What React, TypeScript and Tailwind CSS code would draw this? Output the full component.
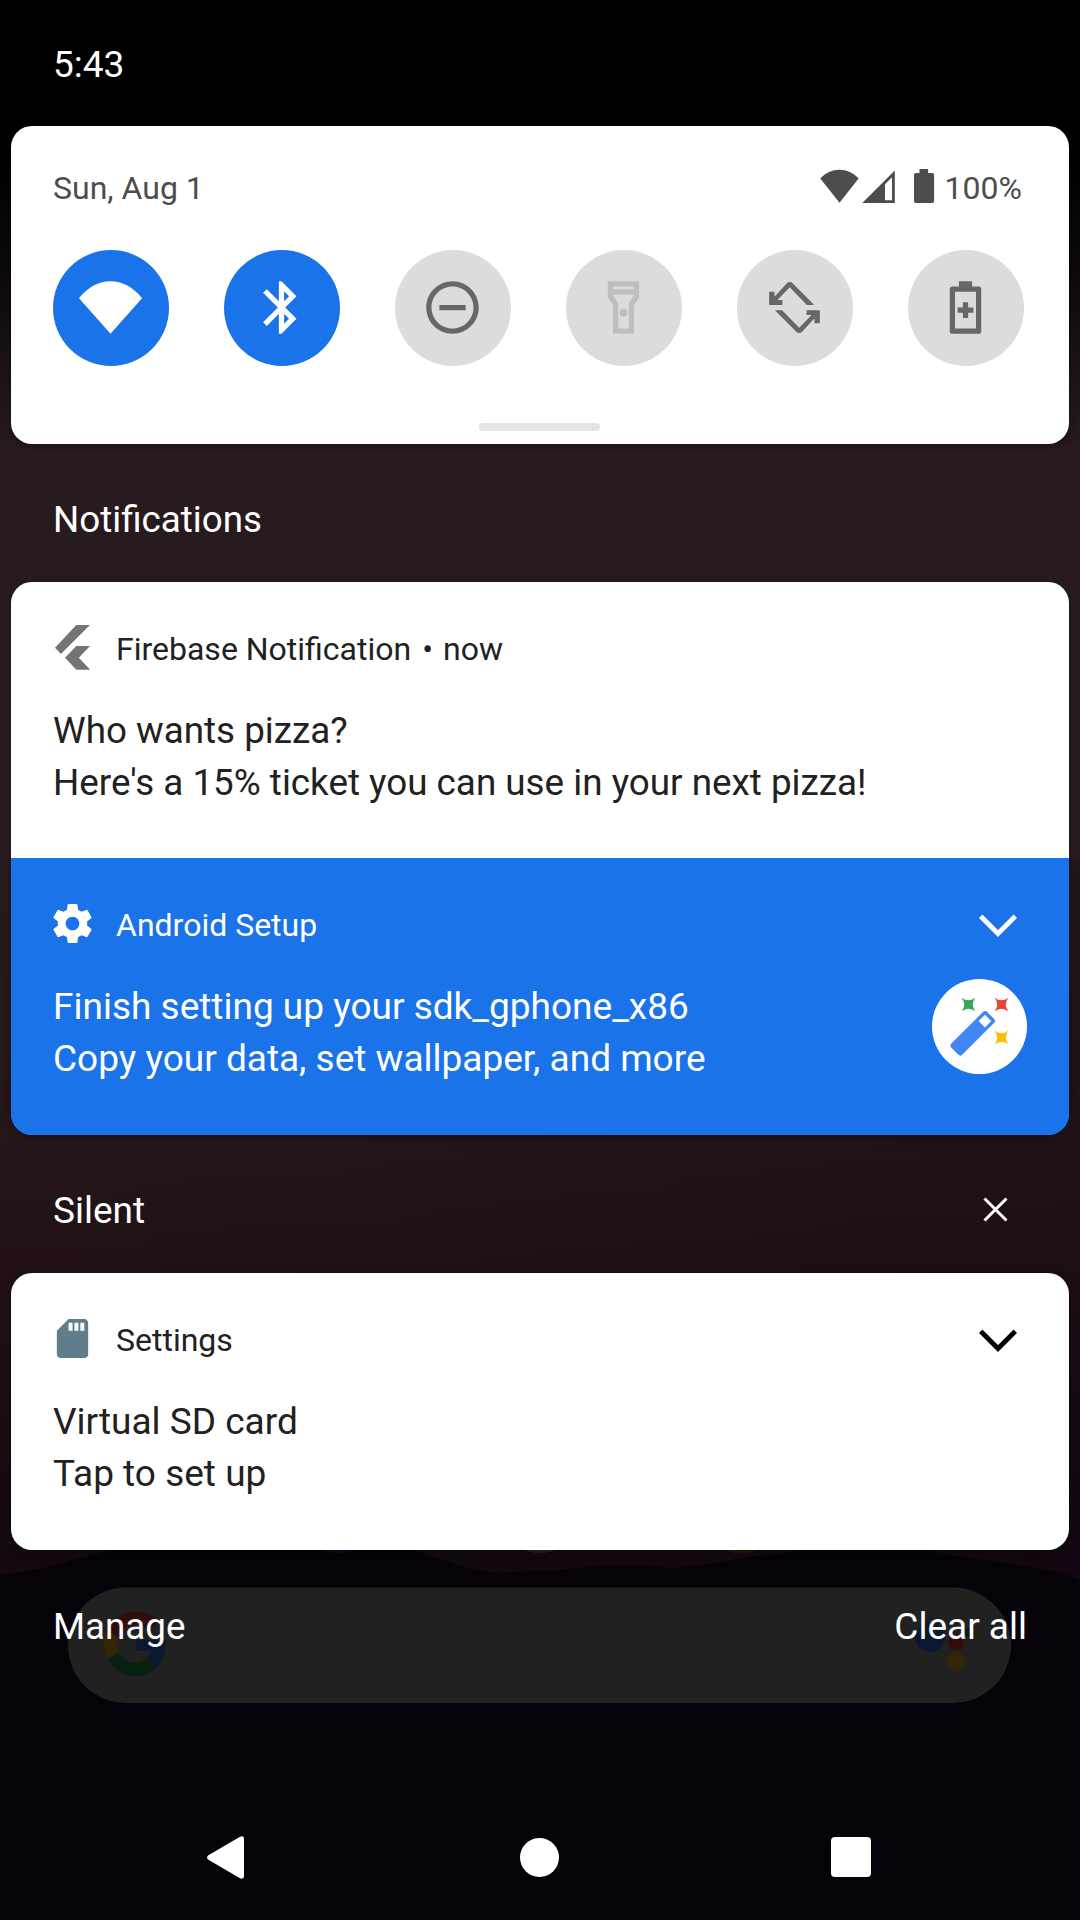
import React from "react";

const GEAR =
  "M19.43 12.98c.04-.32.07-.64.07-.98s-.03-.66-.07-.98l2.11-1.65c.19-.15.24-.42.12-.64l-2-3.46c-.12-.22-.39-.3-.61-.22l-2.49 1c-.52-.4-1.08-.73-1.69-.98l-.38-2.65C14.46 2.18 14.25 2 14 2h-4c-.25 0-.46.18-.49.42l-.38 2.65c-.61.25-1.17.59-1.69.98l-2.49-1c-.23-.09-.49 0-.61.22l-2 3.46c-.13.22-.07.49.12.64l2.11 1.65c-.04.32-.07.65-.07.98s.03.66.07.98l-2.11 1.65c-.19.15-.24.42-.12.64l2 3.46c.12.22.39.3.61.22l2.49-1c.52.4 1.08.73 1.69.98l.38 2.65c.03.24.24.42.49.42h4c.25 0 .46-.18.49-.42l.38-2.65c.61-.25 1.17-.59 1.69-.98l2.49 1c.23.09.49 0 .61-.22l2-3.46c.12-.22.07-.49-.12-.64l-2.11-1.65zM12 15.5c-1.93 0-3.5-1.57-3.5-3.5s1.57-3.5 3.5-3.5 3.5 1.57 3.5 3.5-1.57 3.5-3.5 3.5z";

const ROTATE_HALF =
  "M2.350 11V6H4.400V7.900L9.100 2.800a1.500 1.500 0 0 1 2.200 0L19.500 11H16.700L10.200 4.300L5.500 9.100H7.400V11Z";

function Tile({ on, children }: { on?: boolean; children: React.ReactNode }) {
  return (
    <button
      className={
        "flex h-[116px] w-[116px] items-center justify-center rounded-full " +
        (on ? "bg-[#1a73e8] text-white" : "bg-[#dcdcdc] text-[#676767]")
      }
    >
      <svg viewBox="0 0 24 24" className="mb-px mr-px h-[63px] w-[63px]" fill="currentColor">
        {children}
      </svg>
    </button>
  );
}

function Chevron({ className }: { className: string }) {
  return (
    <svg
      viewBox="0 0 38 23"
      className={"mr-[52px] h-[23px] w-[38px] " + className}
      fill="none"
      stroke="currentColor"
      strokeWidth="4.8"
    >
      <path d="M1.700 2.200L19 19.500L36.300 2.200" />
    </svg>
  );
}

function Notice({
  icon,
  app,
  title,
  body,
  expand,
  tone,
  text,
  large,
}: {
  icon: React.ReactNode;
  app: React.ReactNode;
  title: string;
  body: string;
  expand?: string;
  tone: string;
  text: string;
  large?: React.ReactNode;
}) {
  return (
    <article className={"h-[277px] pl-[42px] pt-[47px] " + tone}>
      <header className="flex h-10 items-center justify-between">
        <div className="flex items-center">
          <div className="mb-[3px] flex h-[47px] w-[39px] items-center justify-center">{icon}</div>
          <span className="ml-6 text-[32px] leading-10">{app}</span>
        </div>
        {expand && <Chevron className={expand} />}
      </header>
      <div className="flex justify-between">
        <div className={"mt-9 leading-[52px] " + text}>
          <p>{title}</p>
          <p>{body}</p>
        </div>
        {large}
      </div>
    </article>
  );
}

function Backdrop() {
  return (
    <svg viewBox="0 0 1080 1920" className="absolute inset-0 h-full w-full" aria-hidden="true">
      <defs>
        <linearGradient id="sky" x1="0" y1="0" x2="0" y2="1">
          <stop offset="0" stopColor="#000" />
          <stop offset="0.08" stopColor="#000" />
          <stop offset="0.16" stopColor="#120d0f" />
          <stop offset="0.235" stopColor="#271b1f" />
          <stop offset="0.45" stopColor="#271b1f" />
          <stop offset="0.6" stopColor="#251619" />
          <stop offset="0.67" stopColor="#201015" />
          <stop offset="0.8" stopColor="#140912" />
          <stop offset="1" stopColor="#0c0510" />
        </linearGradient>
        <linearGradient id="dusk" x1="0" y1="0" x2="1" y2="0">
          <stop offset="0" stopColor="#000" stopOpacity="0" />
          <stop offset="1" stopColor="#080010" stopOpacity="0.2" />
        </linearGradient>
      </defs>
      <rect width="1080" height="1920" fill="url(#sky)" />
      <rect y="860" width="1080" height="760" fill="url(#dusk)" />
      <path
        d="M0 1574C50 1572 80 1553 130 1548L400 1546C430 1555 460 1568 495 1573L560 1570C600 1565 640 1562 670 1569C710 1564 750 1556 800 1551L930 1551C980 1562 1040 1563 1080 1580V1920H0Z"
        fill="#06020a"
      />
      <ellipse cx="337" cy="1524" rx="37" ry="29" fill="#041120" />
      <ellipse cx="540" cy="1524" rx="37" ry="29" fill="#222423" />
      <ellipse cx="742" cy="1524" rx="37" ry="29" fill="#211c05" />
      <rect x="68" y="1587.500" width="943" height="115.500" rx="57.700" fill="#212122" />
      <g fill="none" strokeWidth="13">
        <path d="M154 1626A25 25 0 0 0 112.500 1634" stroke="#310d0d" />
        <path d="M112.500 1634A25 25 0 0 0 113 1656" stroke="#332602" />
        <path d="M113 1656A25 25 0 0 0 151.500 1663" stroke="#082010" />
        <path d="M151.500 1663A25 25 0 0 0 159 1645" stroke="#0a1930" />
      </g>
      <path d="M136 1640h29v11h-29z" fill="#0a1930" />
      <circle cx="930" cy="1637" r="15" fill="#0a1930" />
      <circle cx="956" cy="1642" r="8" fill="#310d0d" />
      <circle cx="956" cy="1661" r="9" fill="#332602" />
      <circle cx="967" cy="1632" r="4" fill="#082010" />
    </svg>
  );
}

const SPARK = "M-6.800 -6.800Q0 -1.800 6.800 -6.800Q1.800 0 6.800 6.800Q0 1.800 -6.800 6.800Q-1.800 0 -6.800 -6.800Z";

function WandBadge() {
  return (
    <div className="mr-[42px] mt-[34px] h-[95px] w-[95px] rounded-full bg-white">
      <svg viewBox="0 0 95 95" className="h-[95px] w-[95px]">
        <path d={SPARK} transform="translate(36.500 25.500)" fill="#34a853" />
        <path d={SPARK} transform="translate(69.500 25.500)" fill="#ea4335" />
        <path d={SPARK} transform="translate(69.500 58.500)" fill="#fbbc04" />
        <g transform="translate(40.700 54.300) rotate(-45)">
          <rect x="-25.300" y="-7.800" width="50.600" height="15.600" rx="3" fill="#4285f4" />
          <rect x="12.800" y="-4.500" width="9" height="9" fill="#fff" />
        </g>
      </svg>
    </div>
  );
}

export default function App() {
  return (
    <div className="relative h-[1920px] w-[1080px] overflow-hidden bg-black font-['Roboto',sans-serif] text-[#212121]">
      <Backdrop />
      <div className="relative flex h-full flex-col px-[11px]">
        <div className="h-[126px] pl-[42px] pt-[39px] text-[37px] leading-[52px] text-white">5:43</div>

        <section className="h-[318px] rounded-[21px] bg-white shadow-[0_2px_8px_rgba(0,0,0,0.3)]">
          <div className="flex h-[124px] items-center justify-between pl-[42px] pr-[47px] text-[32px] text-[#4d4d4d]">
            <span>Sun, Aug 1</span>
            <div className="flex items-center">
              <svg viewBox="0 0 115 34" className="mb-1 h-[34px] w-[115px]" fill="currentColor">
                <path d="M0.300 9.600C10.500 -2.100 28.500 -2.100 38.600 9.600L19.500 33.800Z" />
                <path fillRule="evenodd" d="M42.300 34L74.800 1.600V34ZM65 15.300V31.300H72V8.300Z" />
                <path d="M99.500 0h8.600v4h4a2 2 0 0 1 2 2v26a2 2 0 0 1-2 2H96a2 2 0 0 1-2-2V6a2 2 0 0 1 2-2h3.500z" />
              </svg>
              <span className="ml-[10px]">100%</span>
            </div>
          </div>
          <div className="flex justify-between pl-[42px] pr-[45px]">
            <Tile on>
              <path d="M12 22L0 8.500C6.500 -.2 17.500 -.2 24 8.500Z" />
            </Tile>
            <Tile on>
              <path d="M17.710 7.710L12 2h-1v7.590L6.410 5 5 6.410 10.590 12 5 17.590 6.410 19 11 14.410V22h1l5.710-5.710-4.300-4.290 4.300-4.290zM13 5.830l1.880 1.880L13 9.590V5.830zm1.880 10.460L13 18.170v-3.760l1.880 1.880z" />
            </Tile>
            <Tile>
              <path d="M7 11v2h10v-2H7zm5-9C6.480 2 2 6.480 2 12s4.480 10 10 10 10-4.480 10-10S17.520 2 12 2zm0 18c-4.410 0-8-3.590-8-8s3.590-8 8-8 8 3.590 8 8-3.590 8-8 8z" />
            </Tile>
            <Tile>
              <g fill="#bebebe">
                <path fillRule="evenodd" d="M6 2h12v6l-2 3v11H8V11L6 8ZM8 4v1h8V4ZM8 7v.4l2 3V20h4v-9.600l2-3V7Z" />
                <circle cx="12" cy="14" r="1.500" />
              </g>
            </Tile>
            <Tile>
              <path d={ROTATE_HALF} />
              <path d={ROTATE_HALF} transform="rotate(180 12 12)" />
            </Tile>
            <Tile>
              <path
                fillRule="evenodd"
                d="M9.500 2h5v2H17a1 1 0 0 1 1 1v16a1 1 0 0 1-1 1H7a1 1 0 0 1-1-1V5a1 1 0 0 1 1-1h2.500zM8 6v14h8V6zM11 10h2v2h2v2h-2v2h-2v-2H9v-2h2z"
              />
            </Tile>
          </div>
          <div className="ml-[468px] mt-[57px] h-2 w-[121px] rounded-full bg-[#e4e4e4]" />
        </section>

        <h2 className="h-[138px] pl-[42px] pt-[50px] text-[36.75px] leading-[52px] text-white">Notifications</h2>

        <section className="h-[553px] overflow-hidden rounded-[21px] bg-[#1a73e8] shadow-[0_2px_8px_rgba(0,0,0,0.3)]">
          <div className="h-[276px]">
            <Notice
              tone="bg-white"
              text="text-[36.8px]"
              icon={
                <svg viewBox="0 0 35 45" className="h-[45px] w-[35px]" fill="#737476">
                  <path d="M21.300 0H35.100L5.900 29L0 22.700ZM21.300 21H35.100L23.800 32.700L35.100 44.700H21.300L10 32.700Z" />
                </svg>
              }
              app={
                <>
                  Firebase Notification<span className="ml-[11px] mr-[10px]">•</span>now
                </>
              }
              title="Who wants pizza?"
              body="Here's a 15% ticket you can use in your next pizza!"
            />
          </div>
          <Notice
            tone="relative bg-[#1a73e8] text-white"
            text="text-[37px]"
            icon={
              <svg viewBox="0 0 24 24" className="h-[47px] w-[47px] shrink-0" fill="currentColor">
                <path d={GEAR} />
              </svg>
            }
            app="Android Setup"
            title="Finish setting up your sdk_gphone_x86"
            body="Copy your data, set wallpaper, and more"
            expand="text-white"
            large={<WandBadge />}
          />
        </section>

        <div className="flex h-[138px] items-center justify-between pl-[42px] pr-[61px] pt-[11px] text-white">
          <h2 className="pt-[2px] text-[37px] leading-[52px]">Silent</h2>
          <svg viewBox="0 0 25 25" className="h-[25px] w-[25px]" fill="none" stroke="currentColor" strokeWidth="3">
            <path d="M1.500 1.500L23.500 23.500M23.500 1.500L1.500 23.500" />
          </svg>
        </div>

        <section className="h-[277px] overflow-hidden rounded-[21px] shadow-[0_2px_8px_rgba(0,0,0,0.3)]">
          <Notice
            tone="bg-white"
            text="text-[37px]"
            icon={
              <svg viewBox="0 0 24 24" className="h-[47px] w-[47px] shrink-0" fill="#607d8b">
                <path d="M18 2h-8L4.020 8 4 20c0 1.100.9 2 2 2h12c1.100 0 2-.9 2-2V4c0-1.100-.9-2-2-2zm-6 6h-2V4h2v4zm3 0h-2V4h2v4zm3 0h-2V4h2v4z" />
              </svg>
            }
            app="Settings"
            title="Virtual SD card"
            body="Tap to set up"
            expand="text-black"
          />
        </section>

        <footer className="flex justify-between pl-[42px] pr-[42px] pt-[51px] leading-[52px] text-white">
          <button className="text-[36.75px] leading-[52px]">Manage</button>
          <button className="text-[37px] leading-[52px]">Clear all</button>
        </footer>

        <nav className="mt-auto flex h-[126px] items-center pl-[196px]">
          <svg viewBox="0 0 37 43" className="h-[43px] w-[37px]" fill="#fff">
            <path d="M1 19.500L33 .7Q37 -.8 37 3V40Q37 43.800 33 42.300L1 23.500Q-.8 21.500 1 19.500Z" />
          </svg>
          <div className="ml-[276px] h-[39px] w-[39px] rounded-full bg-white" />
          <div className="ml-[272px] h-10 w-10 rounded-[4px] bg-white" />
        </nav>
      </div>
    </div>
  );
}
